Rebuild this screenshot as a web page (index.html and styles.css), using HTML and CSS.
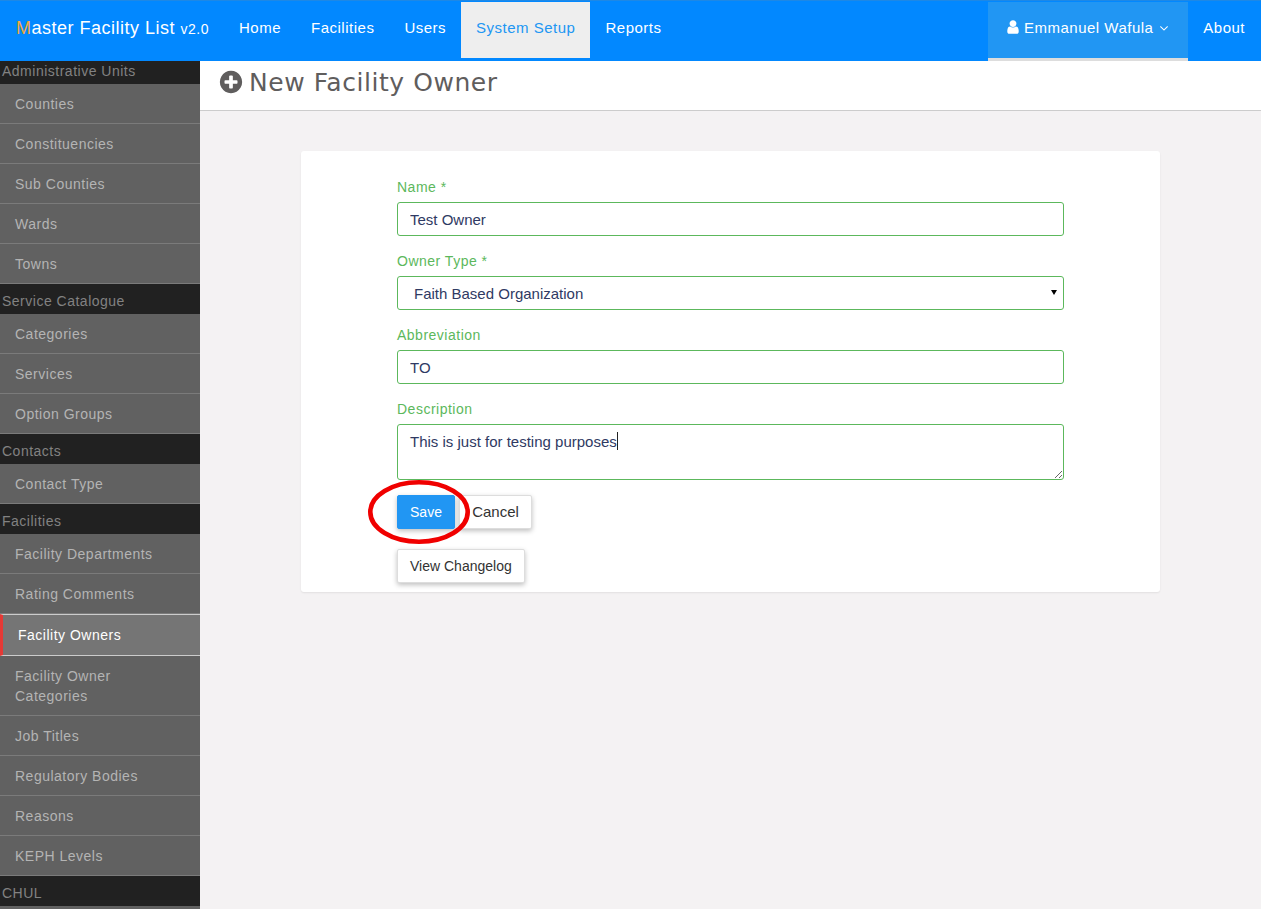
FILE: index.html

```html
<!DOCTYPE html>
<html lang="en">
<head>
  <meta charset="UTF-8" />
  <meta name="viewport" content="width=device-width, initial-scale=1.0"/>
  <title>Master Facility List</title>
  <link rel="stylesheet" href="styles.css">
</head>
<body>
  <header class="navbar">
    <a class="brand" href="#"><span class="brand-m">M</span>aster Facility List <small>v2.0</small></a>
    <nav class="nav-links">
      <a href="#">Home</a>
      <a href="#">Facilities</a>
      <a href="#">Users</a>
      <a class="current" href="#">System Setup</a>
      <a href="#">Reports</a>
    </nav>
    <nav class="nav-right">
      <a class="user-menu" href="#">
        <svg class="icon-user" viewBox="0 0 1792 1792"><path d="M1536 1399q0 109-62.5 187t-150.5 78h-854q-88 0-150.5-78t-62.5-187q0-85 8.5-160.5t31.5-152 58.5-131 94-89 134.5-34.5q131 128 313 128t313-128q76 0 134.5 34.5t94 89 58.5 131 31.5 152 8.5 160.5zm-256-887q0 159-112.5 271.5t-271.5 112.5-271.5-112.5-112.5-271.5 112.5-271.5 271.5-112.5 271.5 112.5 112.5 271.5z"/></svg>
        Emmanuel Wafula
        <svg class="icon-caret" viewBox="0 0 1792 1792"><path d="M1395 736q0 13-10 23l-466 466q-10 10-23 10t-23-10l-466-466q-10-10-10-23t10-23l50-50q10-10 23-10t23 10l393 393 393-393q10-10 23-10t23 10l50 50q10 10 10 23z"/></svg>
      </a>
      <a href="#">About</a>
    </nav>
  </header>

  <div class="layout">
    <aside class="sidebar">
      <div class="side-inner">
        <div class="side-head">Administrative Units</div>
        <a class="side-item" href="#">Counties</a>
        <a class="side-item" href="#">Constituencies</a>
        <a class="side-item" href="#">Sub Counties</a>
        <a class="side-item" href="#">Wards</a>
        <a class="side-item" href="#">Towns</a>
        <div class="side-head">Service Catalogue</div>
        <a class="side-item" href="#">Categories</a>
        <a class="side-item" href="#">Services</a>
        <a class="side-item" href="#">Option Groups</a>
        <div class="side-head">Contacts</div>
        <a class="side-item" href="#">Contact Type</a>
        <div class="side-head">Facilities</div>
        <a class="side-item" href="#">Facility Departments</a>
        <a class="side-item" href="#">Rating Comments</a>
        <a class="side-item active" href="#">Facility Owners</a>
        <a class="side-item" href="#">Facility Owner Categories</a>
        <a class="side-item" href="#">Job Titles</a>
        <a class="side-item" href="#">Regulatory Bodies</a>
        <a class="side-item" href="#">Reasons</a>
        <a class="side-item" href="#">KEPH Levels</a>
        <div class="side-head">CHUL</div>
      </div>
    </aside>

    <main class="content">
      <div class="page-title">
        <svg class="icon-plus" viewBox="0 0 1792 1792"><path d="M1344 960v-128q0-26-19-45t-45-19h-256v-256q0-26-19-45t-45-19h-128q-26 0-45 19t-19 45v256h-256q-26 0-45 19t-19 45v128q0 26 19 45t45 19h256v256q0 26 19 45t45 19h128q26 0 45-19t19-45v-256h256q26 0 45-19t19-45zm320-64q0 209-103 385.5t-279.5 279.5-385.5 103-385.5-103-279.5-279.5-103-385.5 103-385.5 279.5-279.5 385.5-103 385.5 103 279.5 279.5 103 385.5z"/></svg>
        <h1>New Facility Owner</h1>
      </div>

      <div class="card">
        <form class="owner-form">
          <div class="field">
            <label for="name">Name *</label>
            <input id="name" type="text" value="Test Owner" />
          </div>
          <div class="field">
            <label for="ownerType">Owner Type *</label>
            <div class="select-wrap">
              <select id="ownerType">
                <option>Faith Based Organization</option>
              </select>
            </div>
          </div>
          <div class="field">
            <label for="abbr">Abbreviation</label>
            <input id="abbr" type="text" value="TO" />
          </div>
          <div class="field field-desc">
            <label for="desc">Description</label>
            <div class="desc-wrap">
              <textarea id="desc">This is just for testing purposes</textarea>
              <span class="caret"></span>
            </div>
          </div>
          <div class="actions">
            <button class="btn btn-save" type="button">Save</button>
            <button class="btn btn-cancel" type="button">Cancel</button>
            <svg class="red-ring" viewBox="0 0 102 64"><ellipse cx="51" cy="32" rx="48.7" ry="29.7"/></svg>
          </div>
          <div class="actions-2">
            <button class="btn btn-log" type="button">View Changelog</button>
          </div>
        </form>
      </div>
    </main>
  </div>
</body>
</html>
```

FILE: styles.css

```css
* {
  box-sizing: border-box;
}
html, body {
  height: 100%;
}
body {
  margin: 0;
  height: 909px;
  overflow: hidden;
  display: flex;
  flex-direction: column;
  background: #f4f2f3;
  font-family: "Liberation Sans", Arial, sans-serif;
  font-size: 14px;
  color: #333;
}
a {
  text-decoration: none;
}

/* top bar */
.navbar {
  display: flex;
  height: 61px;
  flex-shrink: 0;
  background: #0288ff;
  border-top: 1px solid #1e88e5;
  letter-spacing: 0.5px;
  font-size: 15px;
}
.navbar a {
  color: #fff;
}
.brand {
  font-size: 18px;
  letter-spacing: 0.5px;
  padding: 17px 15px 0 16px;
  white-space: nowrap;
}
.brand small {
  font-size: 14px;
}
.brand-m {
  color: #f0a93c;
}
.nav-links {
  display: flex;
}
.nav-links a, .nav-right a {
  display: block;
  padding: 17px 15px 0;
  margin-top: 1px;
  height: 56px;
}
.nav-links a.current {
  background: #eee;
  color: #2196f3;
}
.nav-right {
  display: flex;
  margin-left: auto;
  padding-right: 1px;
}
.nav-right a.user-menu {
  width: 200px;
  height: 59px;
  padding-left: 17px;
  background: #2196f3;
  border-bottom: 3px solid #ddd;
  white-space: nowrap;
}
.icon-user {
  width: 16px;
  height: 16px;
  margin-right: -2px;
  fill: #fff;
  vertical-align: -2px;
}
.icon-caret {
  width: 14px;
  height: 14px;
  margin-left: -1px;
  fill: #fff;
  vertical-align: -2px;
}

/* sidebar */
.layout {
  display: flex;
  flex: 1;
  min-height: 0;
}
.sidebar {
  width: 200px;
  flex-shrink: 0;
  overflow: hidden;
  background: #616161;
}
.side-inner {
  margin-top: -7px;
}
.side-head {
  height: 30px;
  padding: 9px 0 0 2px;
  background: #212121;
  color: #828282;
  line-height: 17px;
  letter-spacing: 0.5px;
}
.side-item {
  display: block;
  padding: 10px 15px 9px;
  line-height: 20px;
  color: #b4b4b4;
  background: #616161;
  border-bottom: 1px solid #7b7b7b;
  letter-spacing: 0.5px;
}
.side-item.active {
  height: 42px;
  padding: 10px 15px 0;
  border-left: 3px solid #e53935;
  border-top: 1px solid #ccc;
  border-bottom: 1px solid #ccc;
  background: #757575;
  color: #fff;
}

/* main area */
.content {
  flex: 1;
  min-width: 0;
}
.page-title {
  display: flex;
  align-items: center;
  gap: 5px;
  height: 50px;
  padding: 0 0 7px 18px;
  background: #fff;
  border-bottom: 1px solid #ccc;
}
.page-title h1 {
  margin: 0;
  font-family: "DejaVu Sans", sans-serif;
  font-size: 25px;
  font-weight: normal;
  letter-spacing: 0.55px;
  color: #5f5d5d;
}
.icon-plus {
  width: 26px;
  height: 26px;
  fill: #5f5d5d;
}
.card {
  width: 859px;
  height: 441px;
  margin: 40px 0 0 101px;
  padding: 26px 96px 0;
  background: #fff;
  border-radius: 3px;
  box-shadow: 0 1px 2px rgba(0, 0, 0, 0.08);
}
.field {
  margin-bottom: 15px;
}
.field label {
  display: block;
  height: 17px;
  margin-bottom: 8px;
  line-height: 20px;
  color: #5cb85c;
  letter-spacing: 0.5px;
}
.field input, .field select, .field textarea {
  display: block;
  width: 100%;
  height: 34px;
  padding: 6px 12px;
  font-family: inherit;
  font-size: 15px;
  color: #2f3a63;
  background: #fff;
  border: 1px solid #5cb85c;
  border-radius: 3px;
  outline: none;
}
.field select {
  appearance: none;
  padding-left: 16px;
}
.select-wrap {
  position: relative;
}
.select-wrap::after {
  content: "";
  position: absolute;
  right: 7px;
  top: 14px;
  border-left: 3px solid transparent;
  border-right: 3px solid transparent;
  border-top: 5px solid #000;
  pointer-events: none;
}
.field textarea {
  height: 56px;
  padding-top: 8px;
}
.desc-wrap {
  position: relative;
}
.caret {
  position: absolute;
  left: 220px;
  top: 8px;
  width: 1px;
  height: 18px;
  background: #222;
}
.actions {
  position: relative;
  display: flex;
  gap: 4px;
}
.actions-2 {
  margin-top: 20px;
}
.btn {
  height: 34px;
  padding: 0 12px;
  font-family: inherit;
  font-size: 14px;
  color: #333;
  background: #fff;
  border: 1px solid #ddd;
  border-radius: 2px;
  box-shadow: 0 2px 5px rgba(0, 0, 0, 0.25);
}
.btn-save {
  width: 58px;
  padding: 0;
  color: #fff;
  background: #2196f3;
  border-color: #2196f3;
}
.btn-cancel {
  width: 73px;
  padding: 0 0 2px;
  font-size: 15px;
}
.red-ring {
  position: absolute;
  left: -29px;
  top: -15px;
  width: 102px;
  height: 64px;
  fill: none;
  stroke: #f00000;
  stroke-width: 4.6px;
  pointer-events: none;
}
```
